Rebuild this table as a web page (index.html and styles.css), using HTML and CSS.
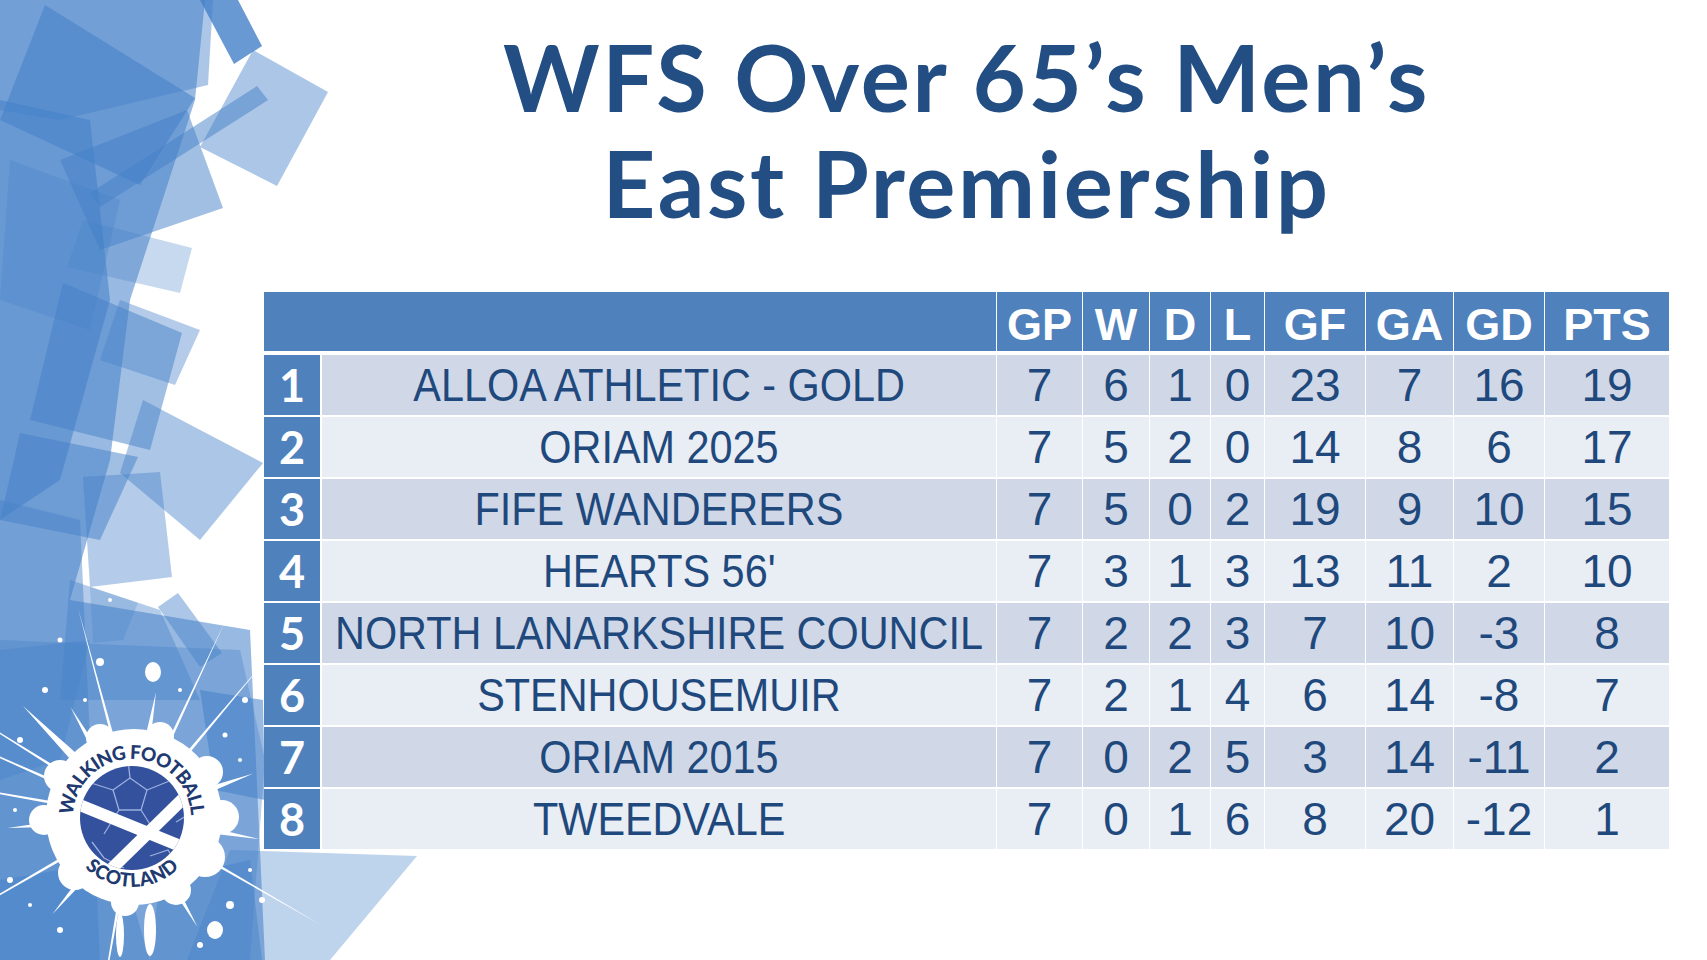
FILE: index.html
```html
<!DOCTYPE html>
<html lang="en">
<head>
<meta charset="utf-8">
<title>WFS Over 65’s Men’s East Premiership</title>
<link rel="stylesheet" href="styles.css">
</head>
<body>
<div class="page">
  <svg class="decor" viewBox="0 0 440 960" width="440" height="960" aria-hidden="true">
    <defs>
      <polygon id="sp1" points="129,745 139,745 134,660"/>
      <polygon id="sp2" points="131,740 137,740 134,690"/>
      <polygon id="sp3" points="132.5,740 135.5,740 134,600"/>
      <clipPath id="ballclip"><circle cx="132" cy="818" r="52"/></clipPath>
      <path id="arcTop" d="M 73 818 A 59 59 0 0 1 191 818"/>
      <path id="arcBot" d="M 83.2 866.1 A 68 68 0 0 0 180.8 866.1"/>
    </defs>
    <g class="shapes" fill="#4480c8">
      <polygon fill-opacity="0.55" points="0,0 205,0 195,100 130,300 110,460 70,600 250,630 265,960 0,960"/>
      <polygon fill-opacity="0.45" points="0,0 213,0 208,85 60,120 0,110"/>
      <polygon fill-opacity="0.8" points="200,0 238,0 262,46 234,64"/>
      <polygon fill-opacity="0.45" points="253,50 328,92 277,186 200,147"/>
      <polygon fill-opacity="0.5" points="257,86 268,100 100,207 90,193"/>
      <polygon fill-opacity="0.55" points="45,5 195,98 140,185 0,120"/>
      <polygon fill-opacity="0.5" points="187,110 223,208 100,250 60,160"/>
      <polygon fill-opacity="0.3" points="83,220 192,248 180,293 67,267"/>
      <polygon fill-opacity="0.55" points="0,100 90,120 110,300 60,480 0,520"/>
      <polygon fill-opacity="0.4" points="120,300 200,330 175,385 100,360"/>
      <polygon fill-opacity="0.5" points="63,283 182,333 150,450 30,420"/>
      <polygon fill-opacity="0.45" points="143,400 263,463 200,540 120,473"/>
      <polygon fill-opacity="0.5" points="20,433 138,457 100,540 0,520"/>
      <polygon fill-opacity="0.4" points="83,477 160,472 172,577 90,587"/>
      <polygon fill-opacity="0.25" points="90,587 138,603 123,640 93,643"/>
      <polygon fill-opacity="0.45" points="158,607 178,593 222,653 200,667"/>
      <polygon fill-opacity="0.45" points="0,500 80,520 100,960 0,960"/>
      <polygon fill-opacity="0.4" points="70,580 160,610 200,700 60,700"/>
      <polygon fill-opacity="0.35" points="0,640 240,650 265,760 250,960 0,960"/>
      <polygon fill-opacity="0.55" points="200,690 263,700 265,800 215,790"/>
      <polygon fill-opacity="0.35" points="230,850 417,856 330,960 187,960"/>
      <polygon fill-opacity="0.45" points="0,880 120,860 150,960 0,960"/>
      <polygon fill-opacity="0.45" points="160,880 250,860 262,960 150,960"/>
      <polygon fill-opacity="0.35" points="0,650 90,640 60,760 0,780"/>
      <polygon fill-opacity="0.3" points="10,160 120,200 90,330 0,300"/>
    </g>
    <g class="splash" fill="#ffffff">
      <circle cx="134" cy="817" r="88"/>
      <circle cx="222" cy="817" r="17"/>
      <circle cx="205" cy="857" r="20"/>
      <circle cx="176" cy="890" r="15"/>
      <circle cx="125" cy="902" r="14"/>
      <circle cx="75" cy="873" r="17"/>
      <circle cx="44" cy="820" r="15"/>
      <circle cx="60" cy="776" r="16"/>
      <circle cx="100" cy="738" r="14"/>
      <circle cx="160" cy="736" r="14"/>
      <circle cx="207" cy="772" r="16"/>
      <ellipse cx="150" cy="930" rx="6" ry="26"/>
      <ellipse cx="120" cy="935" rx="4" ry="22"/>
      <use href="#sp1" transform="rotate(-45 134 817)"/>
      <use href="#sp3" transform="rotate(-58 134 817)"/>
      <use href="#sp3" transform="rotate(-66 134 817)"/>
      <use href="#sp2" transform="rotate(-30 134 817)"/>
      <use href="#sp3" transform="rotate(-15 134 817)"/>
      <use href="#sp2" transform="rotate(10 134 817)"/>
      <use href="#sp3" transform="rotate(25 134 817)"/>
      <use href="#sp3" transform="rotate(40 134 817)"/>
      <use href="#sp2" transform="rotate(70 134 817)"/>
      <use href="#sp2" transform="rotate(100 134 817)"/>
      <use href="#sp3" transform="rotate(120 134 817)"/>
      <use href="#sp2" transform="rotate(150 134 817)"/>
      <use href="#sp3" transform="rotate(-170 134 817)"/>
      <use href="#sp2" transform="rotate(-140 134 817)"/>
      <use href="#sp3" transform="rotate(-120 134 817)"/>
      <use href="#sp2" transform="rotate(-95 134 817)"/>
      <use href="#sp3" transform="rotate(-80 134 817)"/>
      <circle cx="45" cy="690" r="3"/>
      <ellipse cx="153" cy="672" rx="8" ry="10"/>
      <circle cx="100" cy="662" r="4"/>
      <circle cx="20" cy="740" r="3"/>
      <circle cx="245" cy="700" r="3"/>
      <circle cx="230" cy="905" r="4"/>
      <ellipse cx="215" cy="930" rx="8" ry="9"/>
      <circle cx="60" cy="930" r="3"/>
      <circle cx="200" cy="945" r="3"/>
      <circle cx="250" cy="870" r="2"/>
      <circle cx="10" cy="880" r="3"/>
      <circle cx="225" cy="735" r="2.5"/>
      <circle cx="180" cy="690" r="2"/>
      <circle cx="30" cy="905" r="2"/>
      <circle cx="110" cy="600" r="2"/>
      <circle cx="60" cy="640" r="2.5"/>
      <circle cx="85" cy="700" r="2"/>
      <circle cx="240" cy="760" r="2"/>
      <circle cx="262" cy="900" r="3"/>
      <circle cx="15" cy="810" r="2"/>
    </g>
    <g class="ball">
      <circle cx="132" cy="818" r="52" fill="#34519d"/>
      <g clip-path="url(#ballclip)" fill="none" stroke="#9bb0de" stroke-width="1.3">
        <polygon points="130,778 147,790 141,810 119,810 113,790"/>
        <line x1="130" y1="778" x2="128" y2="760"/>
        <line x1="147" y1="790" x2="172" y2="780"/>
        <line x1="141" y1="810" x2="156" y2="834"/>
        <line x1="119" y1="810" x2="104" y2="834"/>
        <line x1="113" y1="790" x2="88" y2="782"/>
        <polyline points="88,782 98,760 128,758 160,762 172,780 184,804"/>
        <polyline points="92,842 104,858 124,868"/>
        <polyline points="150,856 168,850 178,866"/>
        <polyline points="176,822 186,816"/>
        <g stroke="#ffffff" stroke-width="12">
          <line x1="60" y1="797" x2="210" y2="858"/>
          <line x1="96" y1="884" x2="196" y2="786"/>
        </g>
      </g>
    </g>
    <g class="ring" fill="#1f3a70">
      <text class="ring-text"><textPath href="#arcTop" startOffset="50%" text-anchor="middle" textLength="180" lengthAdjust="spacing">WALKING FOOTBALL</textPath></text>
      <text class="ring-text"><textPath href="#arcBot" startOffset="50%" text-anchor="middle" textLength="104" lengthAdjust="spacing">SCOTLAND</textPath></text>
    </g>
  </svg>

  <main class="content">
    <h1 class="title">WFS Over 65’s Men’s<br>East Premiership</h1>
    <div class="standings">
      <div class="row head">
        <div class="cell blank"></div>
        <div class="cell">GP</div><div class="cell">W</div><div class="cell">D</div><div class="cell">L</div>
        <div class="cell">GF</div><div class="cell">GA</div><div class="cell">GD</div><div class="cell">PTS</div>
      </div>
      <div class="row odd">
        <div class="cell rank">1</div><div class="cell team"><span class="team-name">ALLOA ATHLETIC - GOLD</span></div>
        <div class="cell num">7</div><div class="cell num">6</div><div class="cell num">1</div><div class="cell num">0</div>
        <div class="cell num">23</div><div class="cell num">7</div><div class="cell num">16</div><div class="cell num">19</div>
      </div>
      <div class="row even">
        <div class="cell rank">2</div><div class="cell team"><span class="team-name">ORIAM 2025</span></div>
        <div class="cell num">7</div><div class="cell num">5</div><div class="cell num">2</div><div class="cell num">0</div>
        <div class="cell num">14</div><div class="cell num">8</div><div class="cell num">6</div><div class="cell num">17</div>
      </div>
      <div class="row odd">
        <div class="cell rank">3</div><div class="cell team"><span class="team-name">FIFE WANDERERS</span></div>
        <div class="cell num">7</div><div class="cell num">5</div><div class="cell num">0</div><div class="cell num">2</div>
        <div class="cell num">19</div><div class="cell num">9</div><div class="cell num">10</div><div class="cell num">15</div>
      </div>
      <div class="row even">
        <div class="cell rank">4</div><div class="cell team"><span class="team-name">HEARTS 56'</span></div>
        <div class="cell num">7</div><div class="cell num">3</div><div class="cell num">1</div><div class="cell num">3</div>
        <div class="cell num">13</div><div class="cell num">11</div><div class="cell num">2</div><div class="cell num">10</div>
      </div>
      <div class="row odd">
        <div class="cell rank">5</div><div class="cell team"><span class="team-name">NORTH LANARKSHIRE COUNCIL</span></div>
        <div class="cell num">7</div><div class="cell num">2</div><div class="cell num">2</div><div class="cell num">3</div>
        <div class="cell num">7</div><div class="cell num">10</div><div class="cell num">-3</div><div class="cell num">8</div>
      </div>
      <div class="row even">
        <div class="cell rank">6</div><div class="cell team"><span class="team-name">STENHOUSEMUIR</span></div>
        <div class="cell num">7</div><div class="cell num">2</div><div class="cell num">1</div><div class="cell num">4</div>
        <div class="cell num">6</div><div class="cell num">14</div><div class="cell num">-8</div><div class="cell num">7</div>
      </div>
      <div class="row odd">
        <div class="cell rank">7</div><div class="cell team"><span class="team-name">ORIAM 2015</span></div>
        <div class="cell num">7</div><div class="cell num">0</div><div class="cell num">2</div><div class="cell num">5</div>
        <div class="cell num">3</div><div class="cell num">14</div><div class="cell num">-11</div><div class="cell num">2</div>
      </div>
      <div class="row even">
        <div class="cell rank">8</div><div class="cell team"><span class="team-name">TWEEDVALE</span></div>
        <div class="cell num">7</div><div class="cell num">0</div><div class="cell num">1</div><div class="cell num">6</div>
        <div class="cell num">8</div><div class="cell num">20</div><div class="cell num">-12</div><div class="cell num">1</div>
      </div>
    </div>
  </main>
</div>
</body>
</html>
```

FILE: styles.css
```css
html, body {
  margin: 0;
  padding: 0;
  background: #ffffff;
}

.page {
  position: relative;
  width: 1707px;
  height: 960px;
  overflow: hidden;
  background: #ffffff;
}

.decor {
  position: absolute;
  left: 0;
  top: 0;
  width: 440px;
  height: 960px;
}

.ring-text {
  font-family: "Lato", "Liberation Sans", sans-serif;
  font-weight: 900;
  font-size: 19px;
}

.content {
  position: relative;
  display: flex;
  flex-direction: column;
  align-items: flex-start;
  padding: 24px 38px 0 264px;
}

.title {
  margin: 0;
  width: 1405px;
  font-family: "Lato", "Liberation Sans", sans-serif;
  font-weight: 700;
  font-size: 92px;
  line-height: 106px;
  letter-spacing: 2.6px;
  color: #234e83;
  text-align: center;
}

.standings {
  margin-top: 56px;
  width: 1405px;
  display: flex;
  flex-direction: column;
}

.row {
  display: grid;
  grid-template-columns: 58px 675px 86px 67px 61px 54px 101px 88px 91px 124px;
  height: 62px;
}

.row .cell {
  box-sizing: border-box;
  display: flex;
  align-items: center;
  justify-content: center;
  border-right: 1px solid #ffffff;
  border-bottom: 2px solid #ffffff;
  color: #1f497d;
  white-space: nowrap;
}

.row .cell:last-child {
  border-right: 0;
}

.row:last-child {
  height: 60px;
}

.row:last-child .cell {
  border-bottom: 0;
}

.head {
  height: 63px;
}

.head .cell {
  background: #4f81bd;
  color: #ffffff;
  border-bottom-width: 4px;
  padding-top: 6px;
  font-family: "Liberation Sans", sans-serif;
  font-weight: 700;
  font-size: 45px;
}

.head .blank {
  grid-column: span 2;
}

.odd .cell {
  background: #d0d8e8;
}

.even .cell {
  background: #e9edf4;
}

.row .rank {
  background: #4f81bd;
  color: #ffffff;
  border-right-width: 2px;
  font-family: "Lato", "Liberation Sans", sans-serif;
  font-weight: 700;
  font-size: 45px;
}

.team {
  font-family: "Liberation Sans", sans-serif;
  font-size: 46px;
}

.team-name {
  display: inline-block;
  transform: scaleX(0.9);
}

.num {
  font-family: "Liberation Sans", sans-serif;
  font-size: 46px;
}
```
